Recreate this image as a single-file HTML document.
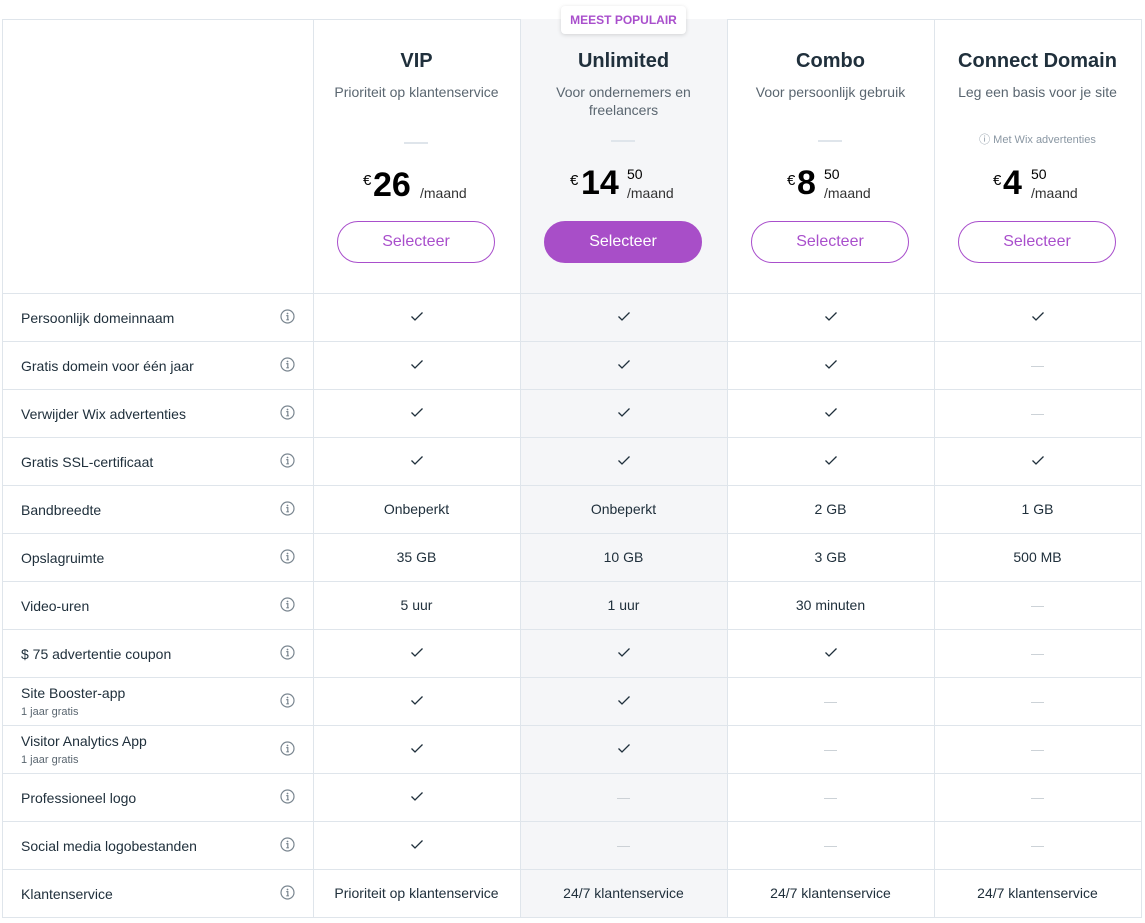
<!DOCTYPE html>
<html><head><meta charset="utf-8"><style>
*{box-sizing:border-box;margin:0;padding:0}
body{width:1145px;height:923px;background:#fff;font-family:"Liberation Sans",sans-serif;color:#20303c;position:relative;overflow:hidden}
.a{position:absolute}
.vl{position:absolute;top:19px;width:1px;height:899px;background:#dfe5eb}
.hl{position:absolute;left:2px;width:1140px;height:1px;background:#dfe5eb}
.col{position:absolute;top:19px;width:207px;height:274px;text-align:center}
.t{position:absolute;top:31px;left:0;width:100%;font-size:20px;font-weight:bold;color:#20303c}
.s{position:absolute;top:64px;left:0;width:100%;font-size:14px;line-height:18px;color:#5a6670}
.d{position:absolute;left:91px;width:24px;height:2px;background:#dfe5eb}
.pr{position:absolute;top:165px;left:0;width:100%;height:40px}
.btn{position:absolute;top:202px;left:24px;width:158px;height:42px;border:1px solid #a94fcc;border-radius:21px;color:#a94fcc;font-size:16px;line-height:40px}
.lab{position:absolute;left:21px;font-size:14px;color:#20303c}
.sub{font-size:11px;color:#5a6670;display:block;margin-top:1px}
.cell{position:absolute;width:207px;text-align:center;font-size:14px;line-height:48px;height:48px}
.dash{color:#c6ccd2;font-size:13px}
.info{position:absolute;left:280px;width:15px;height:15px}
</style></head><body>
<div class="a" style="left:520px;top:19px;width:207px;height:899px;background:#f5f6f8"></div>
<div class="vl" style="left:2px"></div><div class="vl" style="left:313px"></div><div class="vl" style="left:520px"></div><div class="vl" style="left:727px"></div><div class="vl" style="left:934px"></div><div class="vl" style="left:1141px"></div>
<div class="hl" style="top:19px;left:313px;width:207px"></div>
<div class="hl" style="top:19px;left:727px;width:415px"></div>
<div class="hl" style="top:19px;left:2px;width:311px"></div>
<div class="a" style="left:561px;top:6px;width:125px;height:28px;background:#fff;border-radius:4px;box-shadow:0 1px 4px rgba(0,0,0,.15);color:#a94fcc;font-size:12px;font-weight:bold;text-align:center;line-height:28px">MEEST POPULAIR</div>

<div class="col" style="left:313px"><div class="t">VIP</div><div class="s">Prioriteit op klantenservice</div><div class="d" style="top:123px"></div>
<div class="pr"><span class="a" style="left:50px;top:-12px;font-size:15px;color:#000">€</span><span class="a" style="left:60px;top:-18px;font-size:34px;font-weight:bold;color:#000">26</span><span class="a" style="left:107px;top:1px;font-size:14px;color:#333">/maand</span></div>
<div class="btn">Selecteer</div></div>

<div class="col" style="left:520px"><div class="t">Unlimited</div><div class="s">Voor ondernemers en<br>freelancers</div><div class="d" style="top:121px"></div>
<div class="pr"><span class="a" style="left:50px;top:-12px;font-size:15px;color:#000">€</span><span class="a" style="left:61px;top:-20px;font-size:34px;font-weight:bold;color:#000">14</span><span class="a" style="left:107px;top:-18px;font-size:14px;color:#000">50</span><span class="a" style="left:107px;top:1px;font-size:14px;color:#333">/maand</span></div>
<div class="btn" style="background:#a84ec8;border-color:#a84ec8;color:#fff">Selecteer</div></div>

<div class="col" style="left:727px"><div class="t">Combo</div><div class="s">Voor persoonlijk gebruik</div><div class="d" style="top:121px"></div>
<div class="pr"><span class="a" style="left:60px;top:-12px;font-size:15px;color:#000">€</span><span class="a" style="left:70px;top:-20px;font-size:34px;font-weight:bold;color:#000">8</span><span class="a" style="left:97px;top:-18px;font-size:14px;color:#000">50</span><span class="a" style="left:97px;top:1px;font-size:14px;color:#333">/maand</span></div>
<div class="btn">Selecteer</div></div>

<div class="col" style="left:934px"><div class="t">Connect Domain</div><div class="s">Leg een basis voor je site</div>
<div class="a" style="top:112px;left:0;width:100%;font-size:11px;color:#8a97a3">ⓘ Met Wix advertenties</div>
<div class="pr"><span class="a" style="left:59px;top:-12px;font-size:15px;color:#000">€</span><span class="a" style="left:69px;top:-20px;font-size:34px;font-weight:bold;color:#000">4</span><span class="a" style="left:97px;top:-18px;font-size:14px;color:#000">50</span><span class="a" style="left:97px;top:1px;font-size:14px;color:#333">/maand</span></div>
<div class="btn">Selecteer</div></div>

<div id="rows"></div>
<script>
const C='<svg width="14" height="11" viewBox="0 0 14 11"><path d="M1.5 5.5L5 9L12.5 1.5" fill="none" stroke="#20303c" stroke-width="1.3"/></svg>';
const D='<span class="dash">—</span>';
const I='<svg class="info" viewBox="0 0 15 15"><circle cx="7.5" cy="7.5" r="6.5" fill="none" stroke="#7a8690" stroke-width="1.2"/><circle cx="7.5" cy="4.5" r="0.9" fill="#7a8690"/><path d="M6.3 6.6h1.5v4.2M6.3 10.8h2.6" fill="none" stroke="#7a8690" stroke-width="1.2"/></svg>';
const rows=[
["Persoonlijk domeinnaam","",C,C,C,C],
["Gratis domein voor één jaar","",C,C,C,D],
["Verwijder Wix advertenties","",C,C,C,D],
["Gratis SSL-certificaat","",C,C,C,C],
["Bandbreedte","","Onbeperkt","Onbeperkt","2 GB","1 GB"],
["Opslagruimte","","35 GB","10 GB","3 GB","500 MB"],
["Video-uren","","5 uur","1 uur","30 minuten",D],
["$ 75 advertentie coupon","",C,C,C,D],
["Site Booster-app","1 jaar gratis",C,C,D,D],
["Visitor Analytics App","1 jaar gratis",C,C,D,D],
["Professioneel logo","",C,D,D,D],
["Social media logobestanden","",C,D,D,D],
["Klantenservice","","Prioriteit op klantenservice","24/7 klantenservice","24/7 klantenservice","24/7 klantenservice"]];
let h='';const xs=[313,520,727,934];
rows.forEach((r,i)=>{const y=293+i*48;
h+=`<div class="hl" style="top:${y}px"></div>`;
h+= r[1]?`<div class="lab" style="top:${y+7}px;line-height:18px">${r[0]}<span class="sub">${r[1]}</span></div>`:`<div class="lab" style="line-height:48px;top:${y+1}px">${r[0]}</div>`;
h+=`<div class="a" style="left:0;top:${y+16}px">${I}</div>`;
for(let k=0;k<4;k++)h+=`<div class="cell" style="left:${xs[k]}px;top:${y}px">${r[k+2]}</div>`;
});
h+=`<div class="hl" style="top:917px"></div>`;
document.getElementById('rows').innerHTML=h;
</script>
</body></html>
